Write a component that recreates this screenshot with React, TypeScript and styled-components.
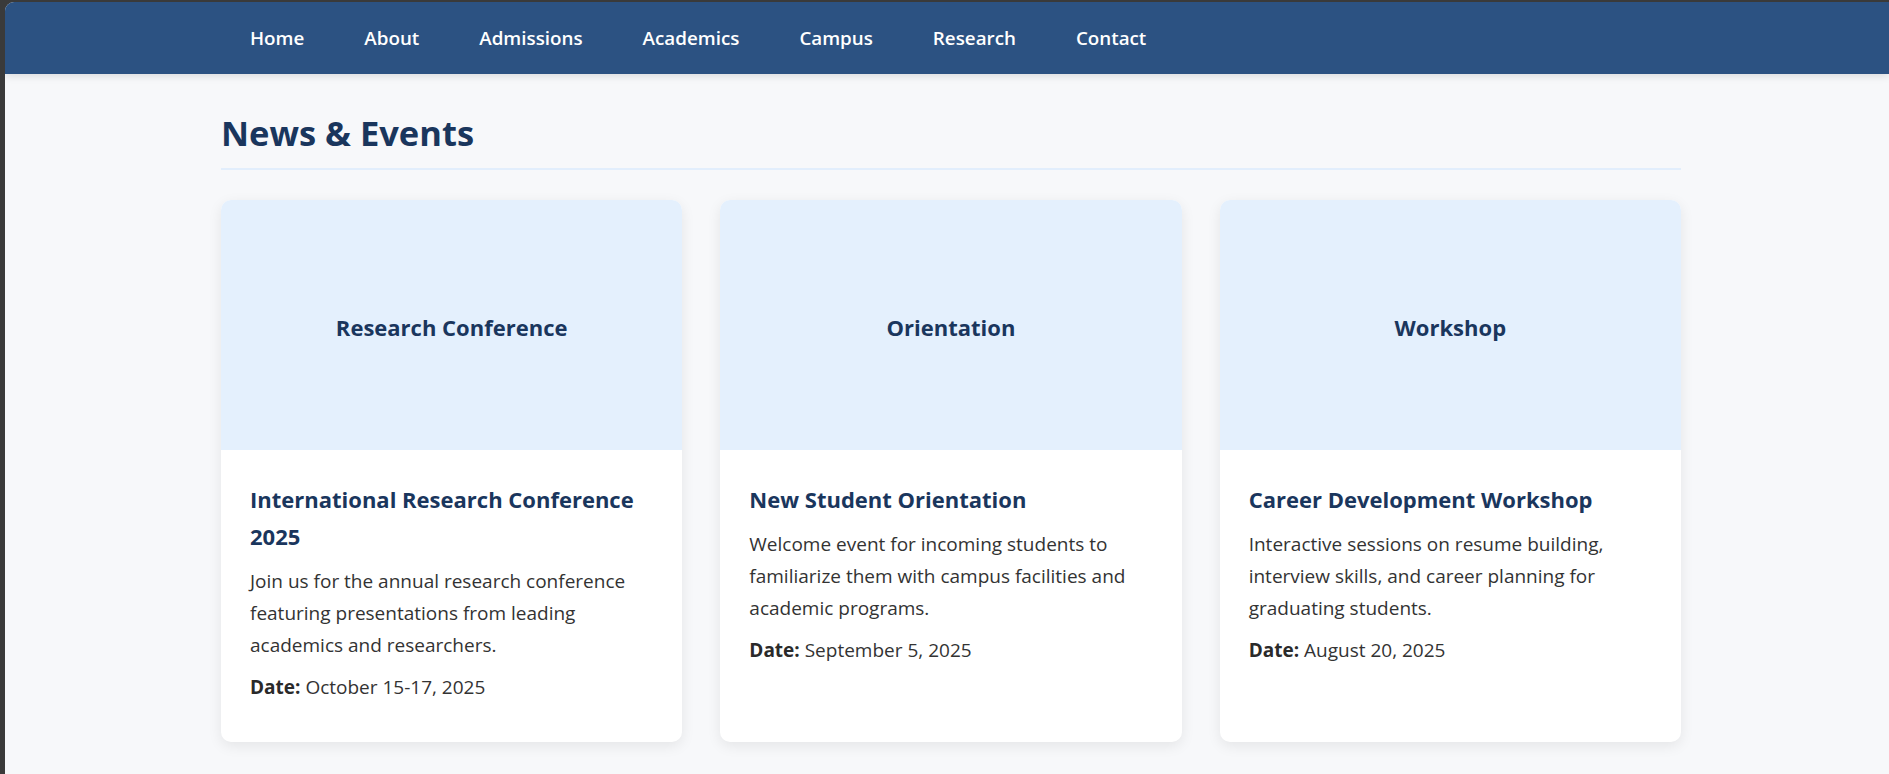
import React from "react";
import styled, { createGlobalStyle } from "styled-components";

const GlobalStyle = createGlobalStyle`
  html, body {
    margin: 0;
    padding: 0;
    background: #3a3a3a;
  }
  * { box-sizing: border-box; }
  body {
    font-family: "Open Sans", "Noto Sans", "Liberation Sans", sans-serif;
  }
`;

const Shell = styled.div`
  padding: 2px 0 0 5px;
  background: #3a3a3a;
  min-height: 774px;
`;

const Page = styled.div`
  background: #f7f8fa;
  border-top-left-radius: 9px;
  overflow: hidden;
  min-height: 772px;
`;

const NavBar = styled.nav`
  background: #2c5282;
  height: 72px;
  box-shadow: 0 2px 8px rgba(0, 0, 0, 0.12);
  padding-left: 8px;
  position: relative;
`;

const Container = styled.div`
  max-width: 1460px;
  margin: 0 auto;
`;

const NavList = styled(Container)`
  display: flex;
  align-items: center;
  height: 100%;
`;

const NavLink = styled.a`
  color: #ffffff;
  text-decoration: none;
  font-weight: 600;
  font-size: 18.8px;
  padding: 0 30px;
  line-height: 72px;
  &:first-child { padding-left: 29px; }
`;

const Main = styled.main`
  padding: 38px 0 40px 8px;
`;

const Heading = styled.h2`
  margin: 0 0 30px;
  padding-bottom: 15px;
  border-bottom: 2px solid #e2eefc;
  color: #1a365d;
  font-size: 34.5px;
  font-weight: 700;
  line-height: 41px;
`;

const Grid = styled.div`
  display: grid;
  grid-template-columns: repeat(3, 1fr);
  gap: 38px;
`;

const Card = styled.article`
  background: #ffffff;
  border-radius: 10px;
  overflow: hidden;
  box-shadow: 0 4px 14px rgba(0, 0, 0, 0.08);
`;

const CardImage = styled.div`
  height: 250px;
  background: #e4f0fd;
  display: flex;
  align-items: center;
  justify-content: center;
  color: #1a365d;
  font-size: 22px;
  font-weight: 700;
  padding-top: 4px;
`;

const CardBody = styled.div`
  padding: 31px 29px 29px;
`;

const CardTitle = styled.h3`
  margin: 0 0 10px;
  color: #1a365d;
  font-size: 22px;
  font-weight: 700;
  line-height: 37px;
`;

const CardText = styled.p`
  margin: 0 0 10px;
  color: #333333;
  font-size: 19px;
  line-height: 32px;
`;

const DateLine = styled(CardText)`
  strong {
    font-weight: 700;
    color: #2a2a2a;
  }
`;

const navItems = ["Home", "About", "Admissions", "Academics", "Campus", "Research", "Contact"];

const events = [
  {
    image: "Research Conference",
    title: "International Research Conference 2025",
    text: "Join us for the annual research conference featuring presentations from leading academics and researchers.",
    date: "October 15-17, 2025",
  },
  {
    image: "Orientation",
    title: "New Student Orientation",
    text: "Welcome event for incoming students to familiarize them with campus facilities and academic programs.",
    date: "September 5, 2025",
  },
  {
    image: "Workshop",
    title: "Career Development Workshop",
    text: "Interactive sessions on resume building, interview skills, and career planning for graduating students.",
    date: "August 20, 2025",
  },
];

export default function App() {
  return (
    <>
      <GlobalStyle />
      <Shell>
        <Page>
          <NavBar>
            <NavList>
              {navItems.map((item) => (
                <NavLink key={item} href="#">
                  {item}
                </NavLink>
              ))}
            </NavList>
          </NavBar>
          <Main>
            <Container>
              <Heading>News &amp; Events</Heading>
              <Grid>
                {events.map((ev) => (
                  <Card key={ev.title}>
                    <CardImage>{ev.image}</CardImage>
                    <CardBody>
                      <CardTitle>{ev.title}</CardTitle>
                      <CardText>{ev.text}</CardText>
                      <DateLine>
                        <strong>Date:</strong> {ev.date}
                      </DateLine>
                    </CardBody>
                  </Card>
                ))}
              </Grid>
            </Container>
          </Main>
        </Page>
      </Shell>
    </>
  );
}
